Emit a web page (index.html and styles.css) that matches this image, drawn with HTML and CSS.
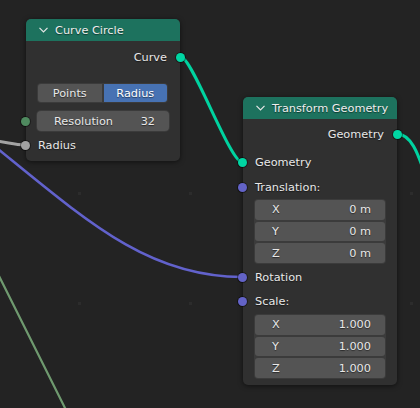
FILE: index.html
```html
<!DOCTYPE html>
<html lang="en">
<head>
  <meta charset="UTF-8">
  <title>Geometry Nodes</title>
  <link rel="stylesheet" href="styles.css">
</head>
<body>
  <div class="editor">
    <svg class="links" width="420" height="408" viewBox="0 0 420 408">
      <g class="grid">
        <rect x="78" y="192" width="3" height="3"/>
        <rect x="189" y="192" width="3" height="3"/>
        <rect x="410" y="192" width="3" height="3"/>
        <rect x="78" y="302" width="3" height="3"/>
        <rect x="189" y="302" width="3" height="3"/>
        <rect x="410" y="302" width="3" height="3"/>
      </g>
      <path class="link geo" d="M 181 57 C 192 57, 230 162, 242 162"/>
      <path class="link geo" d="M 397 134 C 410 134, 418 150, 428 185"/>
      <path class="link vec" d="M -2 149 C 90 224, 150 277, 242 277"/>
      <path class="link float" d="M -30 139 C 5 140, 10 145, 25 145"/>
      <path class="link int" d="M -5 268 L 67 412"/>
    </svg>

    <div class="node node-curve">
      <div class="header">
        <svg class="chevron" width="9" height="6" viewBox="0 0 9 6"><path d="M 0.5 0.8 L 4.5 4.8 L 8.5 0.8"/></svg>
        <span>Curve Circle</span>
      </div>
      <div class="body body-curve">
        <div class="row out">Curve<span class="socket right geo"></span></div>
        <div class="seg">
          <div class="seg-btn">Points</div>
          <div class="seg-btn active">Radius</div>
        </div>
        <div class="field">
          <span class="socket left int"></span>
          <span>Resolution</span><span>32</span>
        </div>
        <div class="row gap-top">
          <span class="socket left float"></span>Radius
        </div>
      </div>
    </div>

    <div class="node node-transform">
      <div class="header">
        <svg class="chevron" width="9" height="6" viewBox="0 0 9 6"><path d="M 0.5 0.8 L 4.5 4.8 L 8.5 0.8"/></svg>
        <span>Transform Geometry</span>
      </div>
      <div class="body body-transform">
        <div class="row out">Geometry<span class="socket right geo"></span></div>
        <div class="row spaced"><span class="socket left geo"></span>Geometry</div>
        <div class="row tight"><span class="socket left vec"></span>Translation:</div>
        <div class="vector">
          <div class="vf"><span>X</span><span>0 m</span></div>
          <div class="vf"><span>Y</span><span>0 m</span></div>
          <div class="vf"><span>Z</span><span>0 m</span></div>
        </div>
        <div class="row tight"><span class="socket left vec"></span>Rotation</div>
        <div class="row"><span class="socket left vec"></span>Scale:</div>
        <div class="vector tight">
          <div class="vf"><span>X</span><span>1.000</span></div>
          <div class="vf"><span>Y</span><span>1.000</span></div>
          <div class="vf"><span>Z</span><span>1.000</span></div>
        </div>
      </div>
    </div>
  </div>
</body>
</html>
```

FILE: styles.css
```css
body {
  margin: 0;
  background: #232323;
  font-family: "DejaVu Sans", sans-serif;
  font-size: 11.3px;
  color: #e8e8e8;
}
.editor {
  position: relative;
  width: 420px;
  height: 408px;
  overflow: hidden;
}
.links {
  position: absolute;
  left: 0;
  top: 0;
}
.grid rect {
  fill: #2c2c2c;
}
.link {
  fill: none;
  stroke-width: 3;
  stroke-linecap: round;
}
.link.geo { stroke: #00d3a0; }
.link.vec { stroke: #6262cc; stroke-width: 2.6; }
.link.float { stroke: #a3a3a3; }
.link.int { stroke: #6f9a6f; stroke-width: 2.2; }

.node {
  position: absolute;
  width: 154px;
  background: #303030;
  border-radius: 5px;
  box-shadow: 0 1px 5px rgba(0,0,0,0.55);
}
.node-curve { left: 26px; top: 19px; }
.node-transform { left: 243px; top: 97px; }

.header {
  height: 22px;
  background: #1d725e;
  border-radius: 5px 5px 0 0;
  display: flex;
  align-items: center;
  gap: 7px;
  padding-left: 13px;
  color: #eeeeee;
  text-shadow: 0 1px 1px rgba(0,0,0,0.5);
}
.chevron path {
  fill: none;
  stroke: #e6e6e6;
  stroke-width: 1.2;
}
.body-curve { padding: 4px 0 4px; }
.body-transform { padding: 3px 0 6px; }

.row {
  position: relative;
  height: 24px;
  display: flex;
  align-items: center;
  padding: 0 12px;
  text-shadow: 0 1px 1px rgba(0,0,0,0.5);
}
.row.out {
  justify-content: flex-end;
  padding-right: 13px;
}
.row.spaced { margin-top: 4px; }
.row.tight { margin-top: 1px; }
.row.gap-top { margin-top: 2px; }

.socket {
  position: absolute;
  top: 50%;
  width: 9px;
  height: 9px;
  margin-top: -4.5px;
  border-radius: 50%;
  box-shadow: 0 0 0 1px rgba(0,0,0,0.4);
}
.socket.left { left: -5.5px; }
.socket.right { right: -5px; }
.socket.geo { background: #00d6a3; }
.socket.vec { background: #6363c7; }
.socket.float { background: #a1a1a1; }
.socket.int { background: #4f8a5f; }

.seg {
  display: flex;
  gap: 2px;
  height: 20px;
  box-sizing: border-box;
  margin: 14px 12px 0 11px;
  padding: 1px;
  background: #3b3b3b;
  border-radius: 4px;
}
.seg-btn {
  flex: 1;
  display: flex;
  align-items: center;
  justify-content: center;
  background: #545454;
  border-radius: 3px 0 0 3px;
  text-shadow: 0 1px 1px rgba(0,0,0,0.5);
}
.seg-btn.active {
  background: #4772b3;
  color: #fff;
  border-radius: 0 3px 3px 0;
}
.field {
  position: relative;
  height: 20px;
  box-sizing: border-box;
  margin: 8px 11px 0;
  padding: 0 14px 0 17px;
  display: flex;
  align-items: center;
  justify-content: space-between;
  background: #545454;
  border-radius: 4px;
  box-shadow: 0 0 0 1px #3b3b3b;
  text-shadow: 0 1px 1px rgba(0,0,0,0.5);
}
.field .socket.left { left: -16.5px; }

.vector {
  height: 65px;
  box-sizing: border-box;
  margin: 0 11px;
  padding: 1px;
  display: flex;
  flex-direction: column;
  gap: 2px;
  background: #3b3b3b;
  border-radius: 4px;
}
.vector.tight { margin-top: 1px; }
.vf {
  flex: 1;
  display: flex;
  align-items: center;
  justify-content: space-between;
  padding: 0 14px 0 17px;
  background: #545454;
  border-radius: 3px;
  text-shadow: 0 1px 1px rgba(0,0,0,0.5);
}
```
